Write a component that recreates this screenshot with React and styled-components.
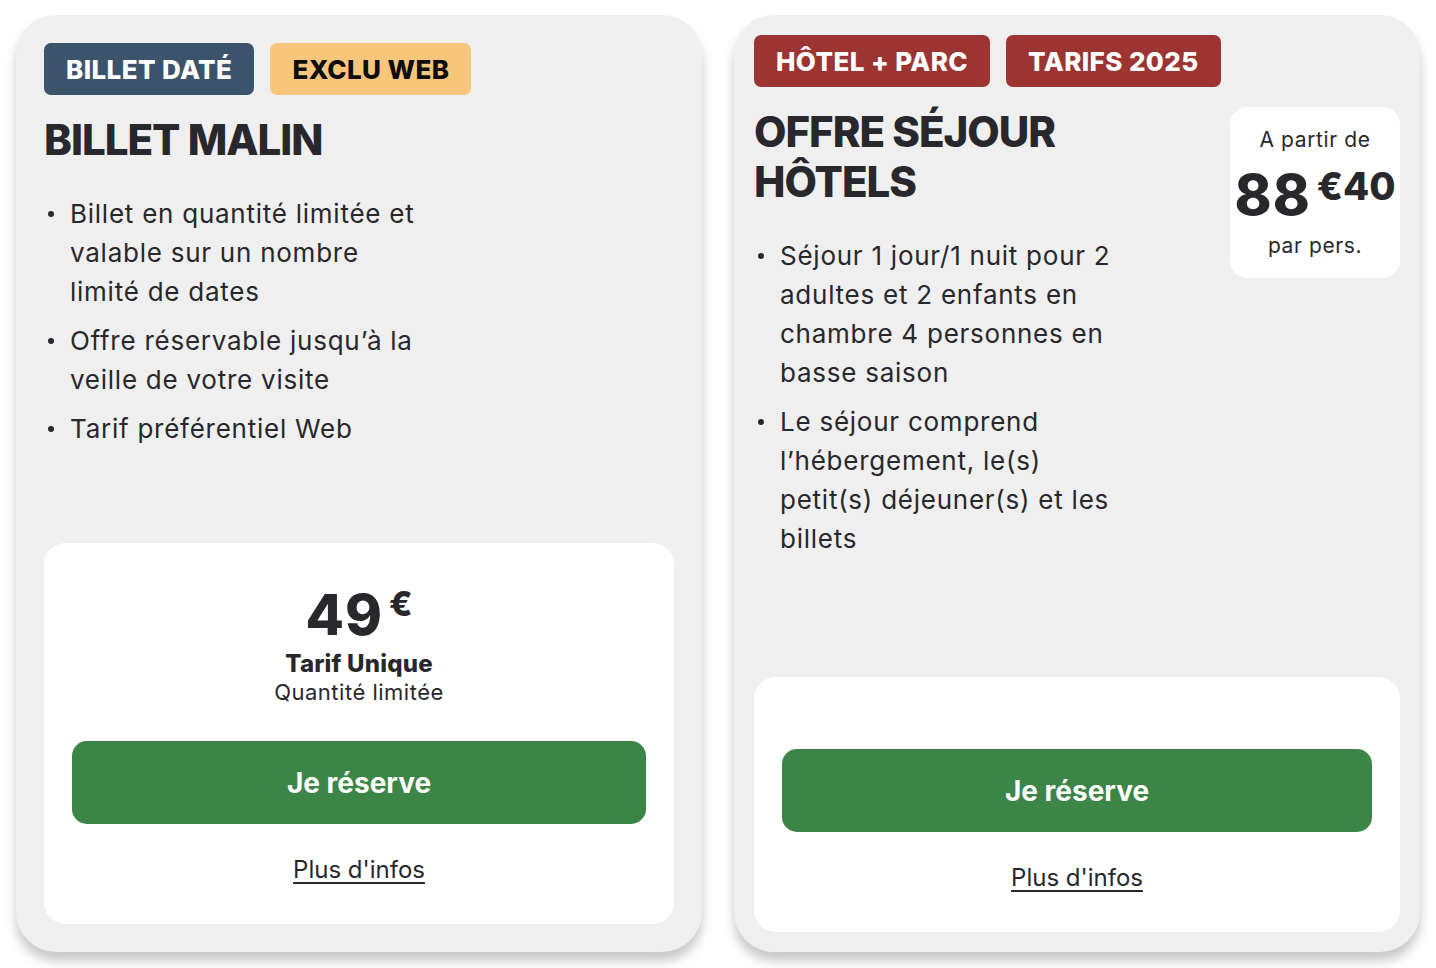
import styled, { createGlobalStyle } from 'styled-components'

const GlobalStyle = createGlobalStyle`
    html, body {
        margin: 0;
        padding: 0;
        background: #ffffff;
    }
    body {
        font-family: "Inter", "Open Sans", sans-serif;
        color: #28272c;
    }
`

const Page = styled.main`
    display: flex;
    gap: 32px;
    padding: 15px 16px 16px;
    align-items: stretch;
`

const Card = styled.article`
    width: 686px;
    height: 937px;
    box-sizing: border-box;
    display: flex;
    flex-direction: column;
    padding: ${p => p.$pad}px;
    background: #efefef;
    border-radius: 40px;
    box-shadow: 0 9px 11px rgba(0, 0, 0, 0.22);
`

const TagRow = styled.div`
    display: flex;
    gap: 16px;
`

const Tag = styled.span`
    display: inline-flex;
    align-items: center;
    height: 52px;
    padding: 0 22px;
    border-radius: 7px;
    background: ${p => p.$bg};
    color: ${p => p.$fg};
    font-size: 26px;
    font-weight: 800;
    letter-spacing: 0.4px;
    text-transform: uppercase;
`

const Head = styled.div`
    display: flex;
    justify-content: space-between;
    align-items: flex-start;
    margin-top: 20px;
`

const Main = styled.div`
    width: 378px;
`

const Title = styled.h2`
    margin: 0;
    font-size: 42px;
    line-height: 50px;
    font-weight: 800;
    letter-spacing: -1px;
    text-transform: uppercase;
    color: #28272c;
`

const List = styled.ul`
    margin: 29px 0 0;
    padding: 0 0 0 26px;
    list-style: none;
`

const Item = styled.li`
    position: relative;
    font-size: 26px;
    line-height: 39px;
    letter-spacing: 0.75px;
    color: #28272c;
    & + & {
        margin-top: 10px;
    }
    &::before {
        content: "";
        position: absolute;
        left: -22px;
        top: 17px;
        width: 6px;
        height: 6px;
        border-radius: 50%;
        background: #28272c;
    }
`

const PriceBox = styled.div`
    width: 170px;
    height: 171px;
    box-sizing: border-box;
    border-radius: 18px;
    background: #ffffff;
    display: flex;
    flex-direction: column;
    align-items: center;
    padding-top: 18px;
`

const Small = styled.div`
    font-size: 21px;
    line-height: 30px;
    letter-spacing: 0.6px;
`

const Amount = styled.div`
    display: flex;
    align-items: flex-start;
    font-weight: 800;
    line-height: 1;
    margin: ${p => p.$top || 0}px 0 ${p => p.$bottom || 0}px;
`

const Big = styled.span`
    font-size: ${p => p.$size}px;
    line-height: ${p => p.$size}px;
    letter-spacing: 1px;
`

const Sup = styled.span`
    font-size: ${p => p.$size}px;
    line-height: ${p => p.$size}px;
    margin-left: ${p => p.$gap}px;
`

const Footer = styled.section`
    margin-top: auto;
    background: #ffffff;
    border-radius: 22px;
    padding: ${p => p.$top}px 28px 0;
    height: ${p => p.$height}px;
    box-sizing: border-box;
    display: flex;
    flex-direction: column;
    align-items: center;
`

const Label = styled.div`
    font-size: 24px;
    line-height: 29px;
    font-weight: 800;
    letter-spacing: 0.2px;
    margin-top: 2px;
`

const Sub = styled.div`
    font-size: 22px;
    line-height: 29px;
    letter-spacing: 0.5px;
`

const Button = styled.button`
    width: 100%;
    height: 83px;
    border: none;
    border-radius: 15px;
    background: #3b8546;
    color: #ffffff;
    font-family: inherit;
    font-size: 28px;
    font-weight: 700;
    margin-top: ${p => p.$gap}px;
    cursor: pointer;
`

const More = styled.a`
    margin-top: 30px;
    font-size: 24px;
    line-height: 32px;
    color: #28272c;
    text-decoration: underline;
    text-underline-offset: 4px;
    text-decoration-thickness: 2px;
`

function App() {
    return (
        <>
            <GlobalStyle />
            <Page>
                <Card $pad={28}>
                    <TagRow>
                        <Tag $bg="#3c546b" $fg="#ffffff">Billet daté</Tag>
                        <Tag $bg="#f7c67b" $fg="#0d0d0d">Exclu web</Tag>
                    </TagRow>
                    <Head>
                        <Main>
                            <Title>Billet malin</Title>
                            <List>
                                <Item>Billet en quantité limitée et valable sur un nombre limité de dates</Item>
                                <Item>Offre réservable jusqu’à la veille de votre visite</Item>
                                <Item>Tarif préférentiel Web</Item>
                            </List>
                        </Main>
                    </Head>
                    <Footer $top={38} $height={381}>
                        <Amount $top={6} $bottom={4}>
                            <Big $size={56}>49</Big>
                            <Sup $size={34} $gap={6}>€</Sup>
                        </Amount>
                        <Label>Tarif Unique</Label>
                        <Sub>Quantité limitée</Sub>
                        <Button $gap={34}>Je réserve</Button>
                        <More href="#">Plus d'infos</More>
                    </Footer>
                </Card>
                <Card $pad={20}>
                    <TagRow>
                        <Tag $bg="#9c3432" $fg="#ffffff">Hôtel + Parc</Tag>
                        <Tag $bg="#9c3432" $fg="#ffffff">Tarifs 2025</Tag>
                    </TagRow>
                    <Head>
                        <Main>
                            <Title>Offre séjour hôtels</Title>
                            <List>
                                <Item>Séjour 1 jour/1 nuit pour 2 adultes et 2 enfants en chambre 4 personnes en basse saison</Item>
                                <Item>Le séjour comprend l’hébergement, le(s) petit(s) déjeuner(s) et les billets</Item>
                            </List>
                        </Main>
                        <PriceBox>
                            <Small>A partir de</Small>
                            <Amount $top={12} $bottom={8}>
                                <Big $size={56}>88</Big>
                                <Sup $size={38} $gap={6}>€40</Sup>
                            </Amount>
                            <Small>par pers.</Small>
                        </PriceBox>
                    </Head>
                    <Footer $top={72} $height={255}>
                        <Button $gap={0}>Je réserve</Button>
                        <More href="#">Plus d'infos</More>
                    </Footer>
                </Card>
            </Page>
        </>
    )
}

export default App
